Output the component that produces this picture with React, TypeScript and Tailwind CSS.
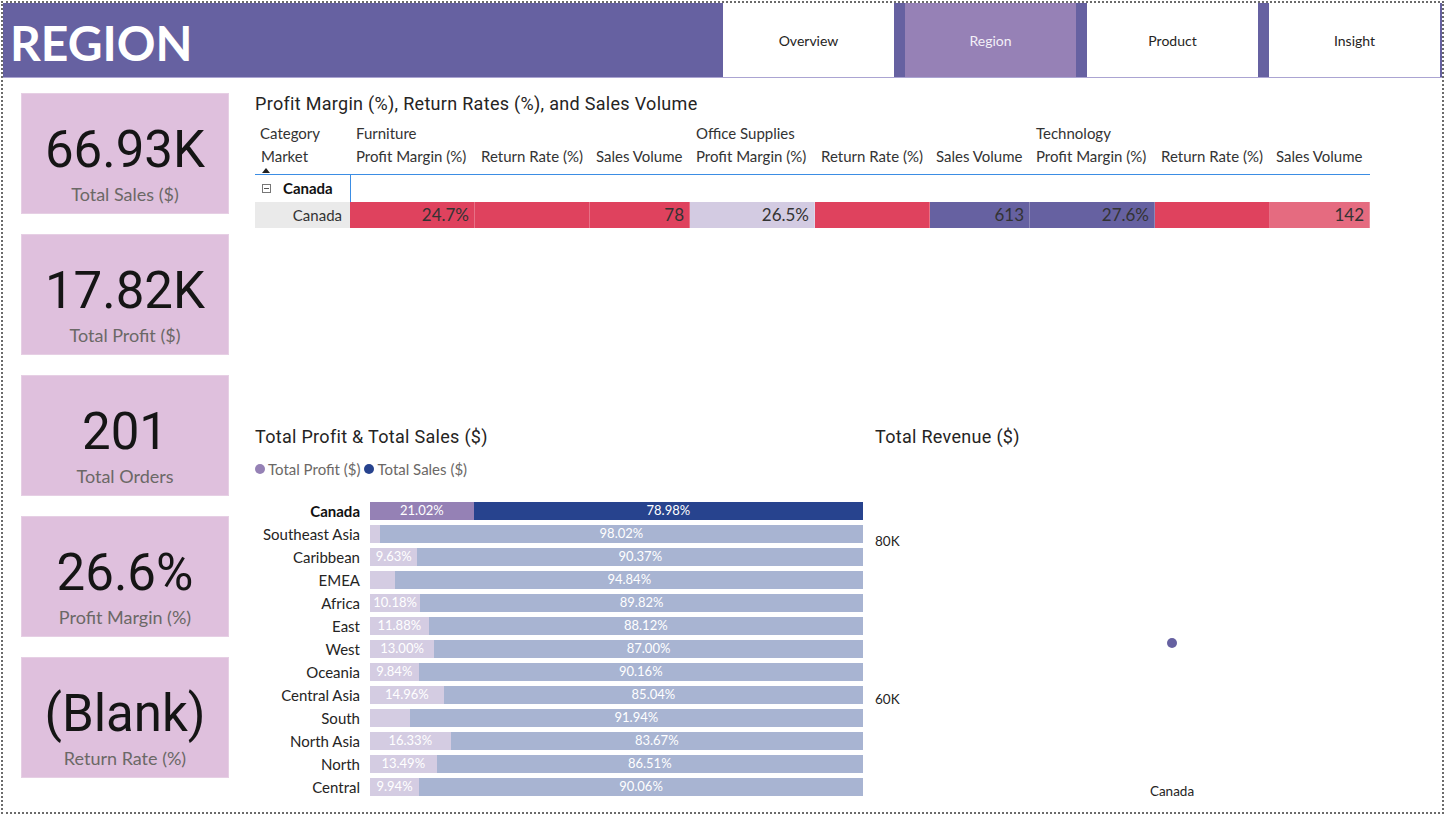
import React from "react"

const kpis = [
  { value: "66.93K", label: "Total Sales ($)" },
  { value: "17.82K", label: "Total Profit ($)" },
  { value: "201", label: "Total Orders" },
  { value: "26.6%", label: "Profit Margin (%)" },
  { value: "(Blank)", label: "Return Rate (%)" },
]

const tabs = ["Overview", "Region", "Product", "Insight"]

const RED = "bg-[#DF425E]"
const LAV = "bg-[#D3CBE2]"
const PURPLE = "bg-[#6661A1]"
const PINK = "bg-[#E56B80]"

const groups = ["Furniture", "Office Supplies", "Technology"]
const measures = ["Profit Margin (%)", "Return Rate (%)", "Sales Volume"]
const colWidths = ["w-[125px]", "w-[115px]", "w-[100px]"]

const cells = [
  { v: "24.7%", bg: RED },
  { v: "", bg: RED },
  { v: "78", bg: RED },
  { v: "26.5%", bg: LAV },
  { v: "", bg: RED },
  { v: "613", bg: PURPLE },
  { v: "27.6%", bg: PURPLE },
  { v: "", bg: RED },
  { v: "142", bg: PINK },
]

const bars = [
  { name: "Canada", p: 21.02, bold: true },
  { name: "Southeast Asia", p: 1.98, hide: true },
  { name: "Caribbean", p: 9.63 },
  { name: "EMEA", p: 5.16, hide: true },
  { name: "Africa", p: 10.18 },
  { name: "East", p: 11.88 },
  { name: "West", p: 13.0 },
  { name: "Oceania", p: 9.84 },
  { name: "Central Asia", p: 14.96 },
  { name: "South", p: 8.06, hide: true },
  { name: "North Asia", p: 16.33 },
  { name: "North", p: 13.49 },
  { name: "Central", p: 9.94 },
]

function KpiCard({ value, label }: { value: string; label: string }) {
  return (
    <div className="flex h-[121px] w-[208px] flex-col items-center border border-[#E6CFE4] bg-[#DFC0DD] pt-[30px]">
      <div className="text-[51px] leading-none text-[#151515] [font-family:Roboto,sans-serif]">{value}</div>
      <div className="mt-[9px] text-[18px] leading-[20px] text-[#6b6866]">{label}</div>
    </div>
  )
}

function MatrixTable() {
  return (
    <div className="w-[1115px] text-[15px] text-[#333]">
      {/* header rows */}
      <div className="flex h-[23px] items-center">
        <div className="w-[95px] pl-[5px]">Category</div>
        {groups.map((g) => (
          <div key={g} className="w-[340px] pl-[6px]">
            {g}
          </div>
        ))}
      </div>
      <div className="flex h-[23px] items-center">
        <div className="w-[95px] pl-[6px]">Market</div>
        {groups.map((g) =>
          measures.map((m, i) => (
            <div key={g + m} className={`${colWidths[i]} pl-[6px] whitespace-nowrap`}>
              {m}
            </div>
          )),
        )}
      </div>
      <div className="flex h-[7px] border-b border-[#3B8DE4]">
        <div className="ml-[7px] h-0 w-0 border-x-[4px] border-b-[5px] border-x-transparent border-b-[#222]" />
      </div>

      <div className="flex">
        <div className="w-[95px]">
          <div className="flex h-[27px] items-center gap-[12px] pl-[7px]">
            <div className="flex h-[9px] w-[9px] items-center justify-center border border-[#777]">
              <div className="h-px w-[5px] bg-[#555]" />
            </div>
            <span className="font-bold text-[#111]">Canada</span>
          </div>
          <div className="flex h-[26px] items-center justify-end bg-[#EAEAEA] pr-[8px] text-[15px]">Canada</div>
        </div>
        <div className="border-l border-[#3B8DE4]">
          <div className="h-[27px]" />
          <div className="flex h-[26px]">
            {cells.map((c, idx) => (
              <div
                key={idx}
                className={`${colWidths[idx % 3]} ${c.bg} flex items-center justify-end border-r border-white/25 pr-[5px] text-[17px] text-[#333] ${idx === 0 ? "-ml-px w-[125px]" : ""}`}
              >
                {c.v}
              </div>
            ))}
          </div>
        </div>
      </div>
    </div>
  )
}

function ProfitSalesChart() {
  return (
    <div className="flex w-[620px] flex-col">
      <div className="h-[20px] text-[18px] leading-[20px] tracking-[0.3px] text-[#252423] [font-family:Roboto,sans-serif]">
        Total Profit &amp; Total Sales ($)
      </div>
      <div className="mt-[14px] flex h-[16px] items-center text-[15px] text-[#6b6866]">
        <span className="mr-[3px] h-[10px] w-[10px] rounded-full bg-[#9581B5]" />
        <span className="mr-[4px]">Total Profit ($)</span>
        <span className="mr-[3px] h-[10px] w-[10px] rounded-full bg-[#27438E]" />
        <span>Total Sales ($)</span>
      </div>
      <div className="mt-[25px] flex flex-col gap-[5px]">
        {bars.map((b) => (
          <div key={b.name} className="flex h-[18px] items-center">
            <div
              className={`w-[105px] text-right text-[15px] whitespace-nowrap ${b.bold ? "font-bold text-[#111]" : "text-[#252423]"}`}
            >
              {b.name}
            </div>
            <div className="ml-[10px] flex h-[18px] w-[493px] text-[13px] text-white">
              <div
                className={`flex items-center justify-center ${b.bold ? "bg-[#9581B5]" : "bg-[#D4CCE2]"}`}
                style={{ width: `${b.p}%` }}
              >
                {b.hide ? "" : `${b.p.toFixed(2)}%`}
              </div>
              <div className={`flex flex-1 items-center justify-center ${b.bold ? "bg-[#27438E]" : "bg-[#A8B4D2]"}`}>
                {(100 - b.p).toFixed(2)}%
              </div>
            </div>
          </div>
        ))}
      </div>
    </div>
  )
}

function RevenueChart() {
  return (
    <div className="relative flex-1">
      <div className="h-[20px] text-[18px] leading-[20px] tracking-[0.3px] text-[#252423] [font-family:Roboto,sans-serif]">
        Total Revenue ($)
      </div>
      <div className="absolute top-[106px] left-0 text-[13.5px] leading-[16px] text-[#252423]">80K</div>
      <div className="absolute top-[264px] left-0 text-[13.5px] leading-[16px] text-[#252423]">60K</div>
      <div className="absolute top-[211px] left-[292px] h-[10px] w-[10px] rounded-full bg-[#6661A1]" />
      <div className="absolute top-[356px] left-[272px] w-[50px] text-center text-[13.5px] leading-[16px] text-[#252423]">
        Canada
      </div>
    </div>
  )
}

export default function App() {
  return (
    <div className="h-[816px] w-[1447px] bg-white p-px [font-family:Lato,'Liberation_Sans',sans-serif]">
      <div className="flex h-[813px] w-[1443px] flex-col border-2 border-dotted border-[#6b6b6b]">
        {/* header */}
        <div className="flex h-[75px] shrink-0 border-b border-[#ABA4D2] bg-[#6661A1]">
          <div className="flex w-[720px] items-center pt-[6px] pl-[7px] text-[48px] font-bold leading-none text-white">
            REGION
          </div>
          <div className="flex gap-[11px]">
            {tabs.map((t) => (
              <div
                key={t}
                className={`flex w-[171px] items-center justify-center text-[14px] ${t === "Region" ? "bg-[#9681B6] text-[#f3f0f8]" : "bg-white text-[#252423]"}`}
              >
                {t}
              </div>
            ))}
          </div>
        </div>

        {/* body */}
        <div className="flex flex-1">
          <div className="flex flex-col gap-[20px] pt-[15px] pl-[18px]">
            {kpis.map((k) => (
              <KpiCard key={k.label} value={k.value} label={k.label} />
            ))}
          </div>

          <div className="ml-[26px] flex flex-1 flex-col pt-[16px]">
            <div className="h-[333px]">
              <div className="h-[20px] text-[18px] leading-[20px] tracking-[0.3px] text-[#252423] [font-family:Roboto,sans-serif]">
                Profit Margin (%), Return Rates (%), and Sales Volume
              </div>
              <div className="mt-[8px]">
                <MatrixTable />
              </div>
            </div>
            <div className="flex flex-1">
              <ProfitSalesChart />
              <RevenueChart />
            </div>
          </div>
        </div>
      </div>
    </div>
  )
}
